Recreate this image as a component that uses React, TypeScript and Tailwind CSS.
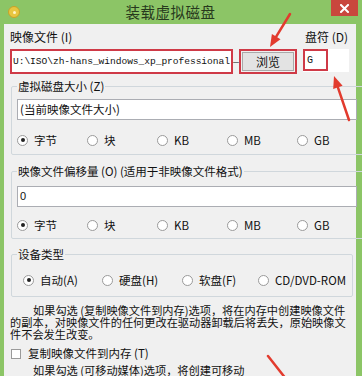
import type { ReactNode } from 'react'

const CJK = "font-['Noto_Sans_CJK_SC','Liberation_Sans',sans-serif]"

function Radio({ label, checked = false, className = '' }: { label: string; checked?: boolean; className?: string }) {
  return (
    <div className={`flex items-center gap-[6px] h-[16px] ${className}`}>
      <span className="relative flex items-center justify-center w-[11px] h-[11px] rounded-full border border-[#9a9a9a] bg-white shrink-0">
        {checked && <span className="w-[4px] h-[4px] rounded-full bg-[#222]" />}
      </span>
      <span className="text-[11.5px] leading-[16px] text-[#111] whitespace-nowrap">{label}</span>
    </div>
  )
}

function Group({ title, className = '', children }: { title: string; className?: string; children: ReactNode }) {
  return (
    <fieldset className={`ml-[1px] w-[339px] border border-[#d0d7dc] rounded-[2px] pl-[5px] pr-[6px] ${className}`}>
      <legend className="px-[1px] text-[11.5px] leading-[16px] text-[#111]">{title}</legend>
      {children}
    </fieldset>
  )
}

function UnitRadios() {
  return (
    <div className="flex">
      <Radio label="字节" checked className="w-[70px]" />
      <Radio label="块" className="w-[70px]" />
      <Radio label="KB" className="w-[70px]" />
      <Radio label="MB" className="w-[70px]" />
      <Radio label="GB" className="w-[60px]" />
    </div>
  )
}

export default function App() {
  return (
    <div className={`relative w-[362px] h-[376px] overflow-hidden bg-[#8cc566] flex flex-col ${CJK}`}>
      {/* title bar */}
      <div className="relative h-[24px] shrink-0 flex items-center">
        <div className="ml-[8px] w-[12px] h-[12px] rounded-full bg-[#e8c640] border border-[#c9a227] flex items-center justify-center">
          <span className="w-[3px] h-[3px] rounded-full bg-[#fff6c8]" />
        </div>
        <div className="flex-1 text-center text-[14.5px] leading-[24px] text-[#27391d] tracking-[0.5px] -ml-[10px]">装载虚拟磁盘</div>
        <div className="mr-[4px] self-start w-[27px] h-[16px] bg-[#c9473d] flex items-center justify-center">
          <svg width="9" height="9" viewBox="0 0 9 9">
            <path d="M1 1 L8 8 M8 1 L1 8" stroke="#fff" strokeWidth="2" strokeLinecap="square" />
          </svg>
        </div>
      </div>

      {/* body */}
      <div className="flex-1 ml-[4px] mr-[6px] bg-[#f0f0f0] pl-[6px] pr-[2px] text-[#111]">
        <div className="h-[25px] flex items-center justify-between text-[12px]">
          <span>映像文件 (I)</span>
          <span className="mr-[6px]">盘符 (D)</span>
        </div>

        <div className="h-[25px] flex items-stretch">
          <div className="w-[223px] border-2 border-[#cf3a47] bg-white flex items-center pl-[1px] overflow-hidden">
            <span className="font-['Liberation_Mono',monospace] text-[9.6px] leading-[12px] whitespace-nowrap tracking-[-0.05px]">U:\ISO\zh-hans_windows_xp_professional</span>
          </div>
          <span className="w-[6px] text-[10px] leading-[22px] font-['Liberation_Mono',monospace]">_</span>
          <div className="w-[58px] border-2 border-[#cf3a47] p-[1px] flex">
            <div className="flex-1 bg-[#e3e3e3] border border-[#a9a9a9] flex items-center justify-center text-[12px]">浏览</div>
          </div>
          <div className="ml-[6px] w-[46px] h-[23px] bg-white flex">
            <div className="w-[25px] h-[22px] border-2 border-[#cf3a47] flex items-center pl-[2px]">
              <span className="font-['Liberation_Mono',monospace] text-[10px]">G</span>
            </div>
          </div>
        </div>

        <Group title="虚拟磁盘大小 (Z)" className="mt-[4px] pb-[6px]">
          <div className="mt-[5px] h-[21px] bg-white border border-[#abadb3] flex items-center pl-[2px] text-[11.5px]">(当前映像文件大小)</div>
          <div className="mt-[12px]"><UnitRadios /></div>
        </Group>

        <Group title="映像文件偏移量 (O)  (适用于非映像文件格式)" className="mt-[8px] pb-[5px]">
          <div className="mt-[7px] h-[21px] bg-white border border-[#abadb3] flex items-center pl-[2px] text-[11px] font-['Liberation_Sans',sans-serif]">0</div>
          <div className="mt-[10px]"><UnitRadios /></div>
        </Group>

        <Group title="设备类型" className="mt-[7px] pb-[8px]">
          <div className="mt-[10px] flex pl-[6px]">
            <Radio label="自动(A)" checked className="w-[79px]" />
            <Radio label="硬盘(H)" className="w-[80px]" />
            <Radio label="软盘(F)" className="w-[76px]" />
            <Radio label="CD/DVD-ROM" />
          </div>
        </Group>

        <div className="mt-[7px] text-[11.2px] leading-[12px] whitespace-nowrap">
          <div className="pl-[23px]">如果勾选 (复制映像文件到内存)选项，将在内存中创建映像文件</div>
          <div>的副本，对映像文件的任何更改在驱动器卸载后将丢失，原始映像文</div>
          <div>件不会发生改变。</div>
        </div>

        <div className="mt-[6px] h-[16px] flex items-center gap-[7px] pl-[1px]">
          <span className="w-[10px] h-[10px] border border-[#9a9a9a] bg-white" />
          <span className="text-[11.5px]">复制映像文件到内存 (T)</span>
        </div>

        <div className="mt-[2px] pl-[23px] text-[11.2px] leading-[12px] whitespace-nowrap">如果勾选 (可移动媒体)选项，将创建可移动</div>
      </div>

      {/* annotation arrows */}
      <svg className="absolute inset-0 pointer-events-none" width="362" height="376" viewBox="0 0 362 376">
        <line x1="290" y1="14" x2="276.2" y2="36.7" stroke="#e23b2e" strokeWidth="2.5" strokeLinecap="round" />
        <polygon points="270,47 280.5,39.3 271.9,34.1" fill="#e23b2e" />
        <line x1="349" y1="120" x2="337.9" y2="87.4" stroke="#e23b2e" strokeWidth="2.5" strokeLinecap="round" />
        <polygon points="334,76 342.6,85.8 333.2,89" fill="#e23b2e" />
        <line x1="268" y1="356" x2="290" y2="384" stroke="#e23b2e" strokeWidth="2.5" strokeLinecap="round" />
      </svg>
    </div>
  )
}
